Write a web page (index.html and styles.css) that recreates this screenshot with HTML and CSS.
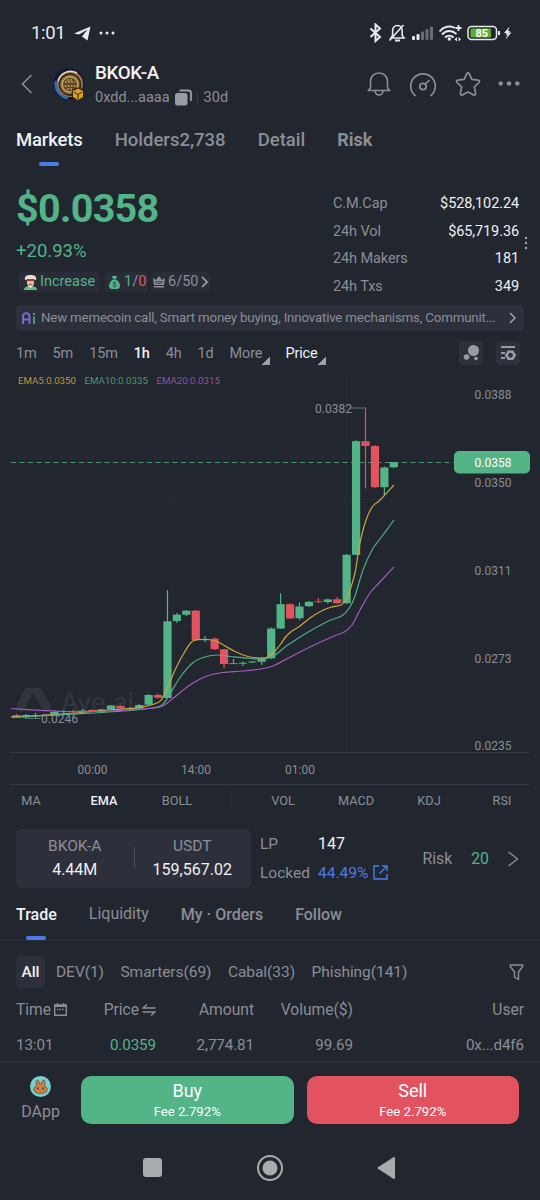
FILE: index.html
```html
<!DOCTYPE html>
<html lang="en">
<head>
  <meta charset="UTF-8">
  <meta name="viewport" content="width=device-width, initial-scale=1.0">
  <title>BKOK-A</title>
  <link rel="stylesheet" href="styles.css">
</head>
<body>
  <div class="status">
    <span class="clock">1:01</span>
    <svg class="telegram" width="17" height="15" viewBox="0 0 17 15"><path d="M0 7.5 16.500.5 13.500 14.500 8 10.500 13.500 3.500 5 8.500z" fill="#e8e9ee"/></svg>
    <svg width="16" height="4" viewBox="0 0 16 4" fill="#e8e9ee"><circle cx="2" cy="2" r="1.5"/><circle cx="8" cy="2" r="1.5"/><circle cx="14" cy="2" r="1.5"/></svg>
    <svg class="status-icons" width="144" height="20" viewBox="370 23 144 20" fill="none" stroke="#e8e9ee" stroke-width="1.6">
      <path d="m371.500 28.500 9.500 8.500-4.500 4V24.500l4.500 4-9.500 8.500" stroke-width="2"/>
      <path d="M392 38h13l-1.800-2.500V31c0-3-1.800-5.500-4.800-5.500s-4.800 2.500-4.800 5.500v4.500zM390.500 40.500 404.500 25" />
      <path d="M396 40.500h5" stroke-width="2"/>
      <g stroke="none" fill="#e8e9ee"><rect x="413" y="36" width="3" height="4" rx="1"/><rect x="417.500" y="34" width="3" height="6" rx="1"/></g>
      <g stroke="none" fill="#686c74"><rect x="422" y="31.500" width="3" height="8.500" rx="1"/><rect x="426.500" y="29" width="3" height="11" rx="1"/><rect x="431" y="26.500" width="3" height="13.500" rx="1"/></g>
      <path d="M440.500 31.500c4-5 10.500-6.500 15.500-3.500M443 34.500c4-4.500 10-4.500 14.500-.5M446 37.500c2.500-2.500 6-2.500 8.500 0" stroke-width="2"/>
      <circle cx="450.300" cy="39" r="1.700" fill="#e8e9ee" stroke="none"/>
      <path d="M459.500 25v6M456.500 28h6" stroke-width="1.800"/>
      <path d="m458 37-2.500 2.300 2.500 2.300zM459.500 37l2.500 2.300-2.500 2.300z" fill="#e8e9ee" stroke="none"/>
      <rect x="469" y="26.500" width="28.500" height="13" rx="3.500" stroke-width="1.500"/>
      <rect x="471.500" y="28.500" width="20.500" height="9" rx="1" fill="#5fae2e" stroke="none"/>
      <path d="M500 31v4" stroke-width="2"/>
      <text x="476.500" y="37" class="battery">85</text>
      <path d="m510.500 26.500-5.500 6.500h3l-2 1.500h2.500l-2 5 6-7h-3l2-1.500h-2.500z" fill="#e8e9ee" stroke="none"/>
    </svg>
  </div>

  <header class="header">
    <svg class="back" width="12" height="20" viewBox="0 0 12 20"><path d="M10.500 1 1.500 10l9 9" fill="none" stroke="#8b8e96" stroke-width="1.600"/></svg>
    <svg class="coin" width="33" height="33" viewBox="0 0 33 33">
      <circle cx="16" cy="16" r="15.500" fill="#11183f"/>
      <path d="M3 13A14 14 0 0 0 15 30" fill="none" stroke="#2f6fb8" stroke-width="2.500"/>
      <circle cx="17" cy="16" r="13" fill="#a17f48"/>
      <path d="M5 13A13 13 0 0 1 24 5" fill="none" stroke="#e9d9b8" stroke-width="1.500"/>
      <circle cx="17" cy="16.500" r="10.500" fill="none" stroke="#3a2c1c" stroke-width="1.800"/>
      <circle cx="17" cy="16.500" r="7.500" fill="#5e4524" stroke="#ddb45f"/>
      <path d="M12 14h10M11.500 18h11M14 21h6M14 12h6" stroke="#e7c77d" stroke-dasharray="2 1"/>
      <circle cx="25" cy="26" r="6.500" fill="#2a2416"/>
      <path d="m25 20.500 5 2.500v6l-5 3-5-3v-6z" fill="#d9a021"/>
      <path d="m21 24 4 2.500 4-2.500M25 26.500V31" stroke="#2a2416" fill="none"/>
    </svg>
    <div class="token">
      <h1>BKOK-A</h1>
      <div class="address">
        <span>0xdd...aaaa</span>
        <svg width="17" height="17" viewBox="0 0 17 17"><path d="M4.500 1.500h9a2.500 2.500 0 0 1 2.500 2.500v8" fill="none" stroke="#9a9ca3" stroke-width="1.800"/><rect x="0" y="4" width="12.500" height="12.500" rx="2.500" fill="#9a9ca3"/></svg>
        <span class="age">30d</span>
      </div>
    </div>
    <div class="actions">
      <svg width="24" height="26" viewBox="0 0 24 26" fill="none" stroke="#8b8e96" stroke-width="1.600" stroke-linejoin="round"><path d="M1.200 19.500 3.500 17v-6.500C3.500 5.500 7 2 12 2s8.500 3.500 8.500 8.500V17l2.300 2.500z"/><path d="M8 20c.3 2.700 2 4 4 4s3.700-1.300 4-4"/></svg>
      <svg width="28" height="26" viewBox="0 0 28 26" fill="none" stroke="#8b8e96" stroke-width="1.700" stroke-linecap="round"><path d="M6 24.500A12.300 12.300 0 1 1 22 24.500"/><circle cx="14" cy="15.500" r="3.200"/><path d="m16.300 13 3.700-3.500"/></svg>
      <svg width="26" height="26" viewBox="0 0 26 26" fill="none" stroke="#8b8e96" stroke-width="1.700" stroke-linejoin="round"><path d="M11.800 2.600c.5-1 1.900-1 2.400 0l2.600 5.700 6.400.8c1.200.2 1.700 1.500.8 2.400l-4.600 4.400 1.200 6.500c.2 1.200-.9 2-1.900 1.500L13 20.900l-5.700 3c-1 .5-2.100-.3-1.900-1.500l1.200-6.500L2 11.500c-.9-.9-.4-2.200.8-2.400l6.400-.8z"/></svg>
      <svg width="22" height="26" viewBox="0 0 22 26" fill="#8b8e96"><circle cx="2.700" cy="12.500" r="2.300"/><circle cx="11" cy="12.500" r="2.300"/><circle cx="19.300" cy="12.500" r="2.300"/></svg>
    </div>
  </header>

  <nav class="tabs">
    <a class="active">Markets</a>
    <a>Holders2,738</a>
    <a>Detail</a>
    <a class="risk-tab">Risk</a>
  </nav>

  <section class="summary">
    <div class="price-box">
      <div class="price">$0.0358</div>
      <div class="change">+20.93%</div>
      <div class="chips">
        <span class="chip increase">
          <svg width="13" height="15" viewBox="0 0 13 15"><path d="M1 5C0 1 3 0 6.500 0S13 1 12 5z" fill="#e7ddd3"/><path d="M3 4h7v4.500c0 4-7 4-7 0z" fill="#eab38a"/><path d="M2.500 4h8v2h-8z" fill="#7b5038"/><path d="M5 9h3v1H5z" fill="#b34b3e"/><path d="M0 15c0-3 3-4 6.500-4S13 12 13 15z" fill="#64bd90"/><path d="m4 11 2.500 2L9 11z" fill="#eee"/></svg>
          Increase
        </span>
        <span class="chip bag">
          <svg width="11" height="13" viewBox="0 0 11 13"><path d="M3 0h5L7 3H4zM4 3.500h3c3 2 4 4.500 4 6.500 0 2-1.500 3-3 3H3c-1.500 0-3-1-3-3 0-2 1-4.500 4-6.500z" fill="#53b488"/><text x="3.500" y="11" class="bag-sign">$</text></svg>
          <span><i class="up">1</i>/<i class="down">0</i></span>
        </span>
        <span class="chip rank">
          <svg width="12" height="12" viewBox="0 0 12 12"><path d="M0 2 3 4l3-4 3 4 3-2-1 7H1zM1 10h10v1.500H1z" fill="#8b8e96"/><text x="2" y="8" class="top">TOP</text></svg>
          6/50
          <svg width="7" height="12" viewBox="0 0 7 12"><path d="m1 1 5 5-5 5" fill="none" stroke="#a0a2aa" stroke-width="1.700"/></svg>
        </span>
      </div>
    </div>
    <dl class="stats">
      <dt>C.M.Cap</dt><dd>$528,102.24</dd>
      <dt>24h Vol</dt><dd>$65,719.36</dd>
      <dt>24h Makers</dt><dd>181</dd>
      <dt>24h Txs</dt><dd>349</dd>
    </dl>
    <svg class="dots" width="4" height="14" viewBox="0 0 4 14" fill="#a0a2aa"><circle cx="2" cy="2" r="1.200"/><circle cx="2" cy="7" r="1.200"/><circle cx="2" cy="12" r="1.200"/></svg>
  </section>

  <div class="ai-bar">
    <svg width="14" height="12" viewBox="0 0 14 12" fill="none" stroke-width="2"><path d="M1 12V4.500C1 2 2.500 1.200 4.200 1.200S7.500 2 7.500 4.500V12M1 7.500h6.500" stroke="#7b68cc"/><path d="M12 4.500V12M12 1v2" stroke="#3d9c83"/></svg>
    <p>New memecoin call, Smart money buying, Innovative mechanisms, Communit...</p>
    <svg width="7" height="12" viewBox="0 0 7 12"><path d="m1 1 5 5-5 5" fill="none" stroke="#a0a2aa" stroke-width="1.500"/></svg>
  </div>

  <div class="intervals">
    <span>1m</span>
    <span>5m</span>
    <span>15m</span>
    <span class="on">1h</span>
    <span>4h</span>
    <span>1d</span>
    <span class="drop">More</span>
    <span class="drop white">Price</span>
    <div class="tools">
      <svg width="24" height="24" viewBox="0 0 24 24" fill="#9a9ca3"><circle cx="14.500" cy="9.500" r="5.500"/><circle cx="7.500" cy="16" r="2.800"/><circle cx="17" cy="17.500" r="1.800"/></svg>
      <svg width="24" height="24" viewBox="0 0 24 24" fill="none" stroke="#9a9ca3" stroke-width="2"><path d="M5 6h14M5 12h4M5 17h4"/><path d="M12.500 10.800h4l2.200 3.500-2.200 3.500h-4l-2.200-3.500z" stroke-width="2.600"/></svg>
    </div>
  </div>

  <!-- chart, drawn by the script below -->
  <svg id="chart" width="540" height="414" viewBox="0 371 540 414">
    <path class="grid" d="M173 373v379M346 373v379M0 499.500h454M0 626.500h454"/>
    <path class="axis" d="M10 752.500h520M10 784.500h520"/>
    <g class="watermark">
      <path d="M25 688h16l9 17a4 4 0 0 1-7 5L33 693l-9 17a4 4 0 0 1-7-5z"/>
      <text x="61" y="711">Ave.ai</text>
    </g>
    <text class="ema" x="18" y="384" fill="#b79a3c">EMA5:0.0350</text>
    <text class="ema" x="84.500" y="384" fill="#4a9a79">EMA10:0.0335</text>
    <text class="ema" x="156.500" y="384" fill="#8f55a8">EMA20:0.0315</text>
    <path class="current" d="M11 462.500h443"/>
    <g id="candles"></g>
    <g id="lines"></g>
    <path d="M350 408h15.500M28 718.500h12" stroke="#686c74"/>
    <g class="label">
      <text x="315" y="412.500">0.0382</text>
      <text x="41" y="723">0.0246</text>
      <text x="474.500" y="399">0.0388</text>
      <text x="474.500" y="487">0.0350</text>
      <text x="474.500" y="574.500">0.0311</text>
      <text x="474.500" y="662.500">0.0273</text>
      <text x="474.500" y="750">0.0235</text>
      <text x="77.500" y="774">00:00</text>
      <text x="181" y="774">14:00</text>
      <text x="285" y="774">01:00</text>
    </g>
    <rect x="454" y="451" width="76" height="22.500" rx="5" fill="#53b488"/>
    <text class="label now" x="474.500" y="467">0.0358</text>
  </svg>

  <div class="indicators">
    <span>MA</span>
    <span class="on">EMA</span>
    <span>BOLL</span>
    <i></i>
    <span>VOL</span>
    <span>MACD</span>
    <span>KDJ</span>
    <span>RSI</span>
  </div>

  <section class="pool">
    <div class="pair">
      <div><span>BKOK-A</span><b>4.44M</b></div>
      <div><span>USDT</span><b>159,567.02</b></div>
    </div>
    <div class="lp">
      <span>LP</span><b>147</b>
      <span>Locked</span>
      <a>44.49%
        <svg width="15" height="15" viewBox="0 0 15 15" fill="none" stroke="#4d7ce6" stroke-width="1.400"><path d="M6 1H1v13h13V9M9 1h5v5M14 1 6.500 8.500"/></svg>
      </a>
    </div>
    <div class="pool-risk">
      <span>Risk</span>
      <em>20</em>
      <svg width="12" height="16" viewBox="0 0 12 16"><path d="m1.500 1 9 7-9 7" fill="none" stroke="#8b8e96" stroke-width="1.400"/></svg>
    </div>
  </section>

  <nav class="subtabs">
    <a class="active">Trade</a>
    <a class="thin">Liquidity</a>
    <a>My · Orders</a>
    <a>Follow</a>
  </nav>

  <div class="filters">
    <span class="all">All</span>
    <span>DEV(1)</span>
    <span>Smarters(69)</span>
    <span>Cabal(33)</span>
    <span>Phishing(141)</span>
    <svg width="15" height="17" viewBox="0 0 15 17"><path d="M1.800 1h11.400c.8 0 1 .9.500 1.500L9.500 8v7.500l-4-2.500V8L1.300 2.500C.8 1.900 1 1 1.800 1z" fill="none" stroke="#8b8e96" stroke-width="1.400" stroke-linejoin="round"/></svg>
  </div>

  <div class="trades">
    <div class="row">
      <span>Time <svg width="13" height="13" viewBox="0 0 13 13" fill="none" stroke="#8b8e96" stroke-width="1.400"><path d="M.7 2h11.600v10.300H.7zM3.500 0v2M9.500 0v2"/><path d="M.7 3h11.600" stroke-width="2"/><path d="M3 6.500h7" stroke-dasharray="1.500 1"/></svg></span>
      <span>Price <svg width="14" height="12" viewBox="0 0 14 12" fill="none" stroke="#8b8e96" stroke-width="1.400"><path d="M5 .5 1 4h12.500M9 11.500 13 8H.5"/></svg></span>
      <span>Amount</span>
      <span>Volume($)</span>
      <span>User</span>
    </div>
    <div class="row">
      <span>13:01</span>
      <span class="up">0.0359</span>
      <span>2,774.81</span>
      <span>99.69</span>
      <span>0x...d4f6</span>
    </div>
  </div>

  <footer class="bottom">
    <div class="dapp">
      <svg width="21" height="21" viewBox="0 0 21 21"><circle cx="10.500" cy="10.500" r="10.500" fill="#78d0d5"/><path d="M6.500 10C5 2.500 8.500 2 9.500 8h2c1-6 4.500-5.500 3 2 2.500 1 3 3 2.500 4.500-.6 2-3 3-6.500 3s-5.900-1-6.500-3C3.500 13 4 11 6.500 10z" fill="#ce8247" stroke="#6d4a34" stroke-width=".8"/><path d="M8 11.500v2M13 11.500v2" stroke="#43302a" stroke-width="1.300"/></svg>
      DApp
    </div>
    <button class="buy">Buy<small>Fee 2.792%</small></button>
    <button class="sell">Sell<small>Fee 2.792%</small></button>
  </footer>

  <div class="system-nav">
    <svg width="19" height="19" viewBox="0 0 19 19"><rect width="19" height="19" rx="3" fill="#aaabaf"/></svg>
    <svg width="26" height="26" viewBox="0 0 26 26"><circle cx="13" cy="13" r="12" fill="none" stroke="#aaabaf" stroke-width="2"/><circle cx="13" cy="13" r="7.500" fill="#aaabaf"/></svg>
    <svg width="19" height="22" viewBox="0 0 19 22"><path d="M17 1v20L1.500 11z" fill="#aaabaf" stroke="#aaabaf" stroke-width="2" stroke-linejoin="round"/></svg>
  </div>

  <script>
    const GREEN = '#53b488';
    const RED = '#e2535f';

    // [color, body top, body bottom, wick top, wick bottom]
    const candles = [
      ['r', 715, 717.5, 714, 718], ['g', 715, 717.5, 714, 719], ['g', 715.2, 716, 713, 718], ['r', 714.8, 716, 714, 716],
      ['g', 712, 716, 711, 716], ['g', 711, 712, 710, 713], ['r', 711, 712, 709.5, 714], ['g', 710.5, 711.5, 709, 713],
      ['r', 710, 712, 709, 712], ['g', 709.5, 712, 709, 713], ['g', 705.5, 709.5, 705, 710], ['r', 706, 708, 705, 709],
      ['r', 708, 709, 707, 709], ['g', 705, 708.5, 704, 709], ['g', 695, 704.7, 694, 705], ['r', 695, 697.7, 693.5, 698.7],
      ['g', 621.3, 698, 590, 698], ['g', 614.7, 621, 613, 623], ['g', 610.7, 614.7, 610, 616], ['r', 610.6, 640, 610, 640],
      ['g', 639.3, 640.2, 636, 642], ['r', 638.7, 649.2, 637.5, 650], ['r', 649.2, 664, 649, 668], ['g', 663.2, 664.1, 659, 664],
      ['g', 662.7, 663.7, 661.5, 666], ['g', 661.5, 662.5, 661, 663], ['g', 658.3, 661.8, 657, 665], ['g', 628.5, 658.3, 627.5, 659],
      ['g', 604.2, 628.5, 593.3, 629], ['r', 604.2, 618.4, 603.5, 619], ['g', 606.5, 618.2, 602.5, 620], ['g', 601.8, 606.2, 601, 607],
      ['r', 601.2, 602.1, 598, 603], ['g', 599.4, 602, 598.5, 603.5], ['r', 599.2, 603.2, 597, 604], ['g', 554.8, 603.2, 554, 604],
      ['g', 441.2, 554.8, 440.3, 555], ['r', 441.2, 446, 407.5, 488.5], ['r', 446, 487.2, 445.3, 488], ['g', 467.5, 487.2, 466.5, 495],
      ['g', 462, 467.3, 462, 468]
    ];

    const lines = [
      ['#c9a83c', [[11,717],[40,715.5],[75,713],[110,710],[140,707.3],[158,702.5],[163,697],[169,684],[176,668],[184,653],[191,642.5],[197,639.8],[208,639.5],[218,642],[226,646.5],[236,652],[248,656.5],[260,658],[267,657.3],[274,652],[280,645],[286,636.5],[292,631],[300,626],[310,618],[320,611.8],[330,607.5],[341,605],[346,600],[350,590],[355,573],[359,548],[363,530],[368,515],[373,506],[380,500],[394,485]]],
      ['#4fae85', [[11,717.5],[75,714],[130,710.5],[155,707.5],[163,704],[170,694],[180,677.5],[192,663.5],[203,657.5],[217,655],[230,656.5],[250,658.5],[265,659],[275,655],[287,645.5],[297,639],[310,631],[330,620.3],[342,615.7],[350,607],[355,596],[363,570],[372,550],[380,539],[394,520]]],
      ['#a25cbc', [[11,708.5],[40,710.3],[70,711.5],[110,711],[140,709],[160,707],[171,700],[182,691],[193,683],[207,676],[223,672.5],[243,671],[263,668.5],[273,666],[287,658.7],[310,647],[333,636.5],[345,631.5],[352,625],[360,610],[370,593],[379,583],[394,566.8]]]
    ];

    document.getElementById('candles').innerHTML = candles.map(([c, top, bottom, high, low], i) => {
      const x = 16.6 + i * 9.43;
      const color = c === 'g' ? GREEN : RED;
      return `<rect x="${x - 4.1}" y="${top}" width="8.2" height="${bottom - top}" fill="${color}"/>` +
        `<rect x="${x - 0.6}" y="${high}" width="1.2" height="${low - high}" fill="${color}"/>`;
    }).join('');

    // smooth curve through all the points
    function curve(p) {
      let d = `M${p[0]}`;
      for (let i = 0; i < p.length - 1; i++) {
        const a = p[i - 1] || p[i], b = p[i], c = p[i + 1], e = p[i + 2] || c;
        d += `C${b[0] + (c[0] - a[0]) / 6},${b[1] + (c[1] - a[1]) / 6} ${c[0] - (e[0] - b[0]) / 6},${c[1] - (e[1] - b[1]) / 6} ${c}`;
      }
      return d;
    }

    document.getElementById('lines').innerHTML = lines.map(([color, p]) =>
      `<path d="${curve(p)}" fill="none" stroke="${color}" stroke-width="1.2"/>`).join('');
  </script>
</body>
</html>
```
FILE: styles.css
```css
* {
  box-sizing: border-box;
}
body {
  margin: 0;
  width: 540px;
  height: 1200px;
  overflow: hidden;
  background-color: #22262f;
  color: #8b8e96;
  font-family: Roboto, sans-serif;
  font-size: 15px;
  line-height: 20px;
}
svg {
  display: block;
  flex: none;
}
i, em {
  font-style: normal;
}
.up {
  color: #53b488;
}
.down {
  color: #e2535f;
}
.on {
  color: #f0f1f5;
  font-weight: 500;
}

/* status bar */
.status {
  display: flex;
  align-items: center;
  height: 66px;
  padding: 0 27px 0 31px;
}
.clock {
  color: #e8e9ee;
  font-size: 18.5px;
  letter-spacing: -0.3px;
  width: 43px;
}
.telegram {
  margin-right: 8px;
}
.status-icons {
  margin-left: auto;
}
.battery {
  font-size: 11px;
  font-weight: 700;
  fill: #fff;
  stroke: none;
}

/* header */
.header {
  display: flex;
  align-items: center;
  height: 46px;
  margin: -5px 0 5px;
  padding: 0 20px 0 21px;
}
.coin {
  margin: 0 9px 0 20px;
}
.token h1 {
  margin: 3px 0 0;
  color: #f0f1f5;
  font-size: 18.8px;
  font-weight: 500;
  line-height: 24px;
  letter-spacing: -0.4px;
}
.address {
  display: flex;
  align-items: center;
  font-size: 14.5px;
  line-height: 26px;
}
.address svg {
  margin: 0 5px 0 5px;
}
.age {
  border-left: 1px solid #343842;
  padding-left: 6px;
  line-height: 12px;
}
.actions {
  display: flex;
  margin-left: auto;
}
.actions svg + svg {
  margin-left: 18px;
}
.actions svg:last-child {
  margin-left: 17px;
}

/* tabs */
.tabs {
  display: flex;
  height: 58px;
  padding: 16px 16px 0;
  font-size: 18.5px;
  font-weight: 500;
  line-height: 25px;
}
.tabs a {
  margin-right: 32px;
}
.tabs a:first-child {
  letter-spacing: -0.15px;
}
.tabs .risk-tab {
  font-weight: 700;
  font-size: 18px;
  margin-top: -1px;
}
.active {
  color: #f0f1f5;
}
.active::after {
  content: "";
  display: block;
  width: 20px;
  height: 4px;
  margin: 9px auto 0;
  border-radius: 2px;
  background-color: #4d7ce6;
}

/* price and stats */
.summary {
  display: flex;
  height: 135px;
  padding: 0 12px 0 16px;
}
.price-box {
  width: 317px;
}
.price {
  margin-top: 17px;
  color: #53b488;
  font-size: 39.5px;
  font-weight: 700;
  line-height: 44px;
  letter-spacing: -0.7px;
}
.change {
  margin-top: 9px;
  color: #53b488;
  font-size: 18.5px;
  line-height: 22px;
}
.chips {
  display: flex;
  margin: 10px 0 0 3px;
}
.chip {
  display: flex;
  align-items: center;
  gap: 4px;
  height: 20px;
  border-radius: 4px;
  background-color: #2a2d37;
  font-size: 14.5px;
}
.increase {
  width: 81px;
  padding-left: 5px;
  gap: 3px;
  color: #53b488;
}
.bag {
  width: 43px;
  margin: 0 3px 0 5px;
  padding-left: 4px;
}
.rank {
  width: 59px;
  padding-left: 2px;
  gap: 3px;
}
.bag-sign {
  font-size: 7px;
  fill: #22262f;
}
.top {
  font-size: 4px;
  font-weight: 700;
  fill: #2a2d37;
}
.stats {
  display: grid;
  grid-template-columns: auto auto;
  grid-auto-rows: 27.5px;
  width: 186px;
  margin: 19px 5px 0 0;
  font-size: 14.5px;
  line-height: 29px;
  letter-spacing: -0.1px;
}
.stats dd {
  margin: 0;
  color: #f0f1f5;
  text-align: right;
}
.dots {
  margin-top: 66px;
}

.ai-bar {
  display: flex;
  align-items: center;
  height: 26px;
  margin: 0 16px;
  padding: 0 8px 0 6px;
  border-radius: 4px;
  background-color: #2d303b;
}
.ai-bar p {
  flex: 1;
  margin: 0 0 0 5px;
  font-size: 13.3px;
  letter-spacing: -0.18px;
  white-space: nowrap;
}

/* chart */
.intervals {
  display: flex;
  align-items: center;
  height: 40px;
  padding: 5px 20px 0 16px;
  font-size: 14.5px;
  letter-spacing: -0.15px;
}
.intervals span {
  margin-right: 16px;
}
.intervals .drop {
  display: flex;
  margin-right: 15px;
}
.drop::after {
  content: "";
  align-self: flex-end;
  width: 8px;
  height: 8px;
  margin: 0 0 -1px;
  background: linear-gradient(135deg, transparent 50%, #a0a2aa 50%);
}
.white {
  color: #f0f1f5;
}
.tools {
  display: flex;
  gap: 13px;
  margin: -1px 0 0 auto;
}
.tools svg {
  border-radius: 4px;
  background-color: #2d303b;
}
.grid {
  stroke: #282c35;
}
.axis {
  stroke: #343842;
}
.watermark {
  fill: #30343c;
  font: 500 25px Inter, sans-serif;
}
.ema {
  font-size: 9.7px;
}
.label {
  font-size: 12px;
  fill: #8b8e96;
}
.now {
  fill: #fff;
}
.current {
  stroke: #459273;
  stroke-dasharray: 5 3.5;
}
.indicators {
  display: flex;
  align-items: center;
  gap: 33px;
  height: 32px;
  padding-left: 11px;
  font-size: 12.7px;
}
.indicators span {
  width: 40px;
  text-align: center;
}
.indicators i {
  width: 1px;
  height: 20px;
  margin-right: -1px;
  background-color: #2d313b;
}

/* pool */
.pool {
  display: flex;
  height: 59px;
  margin: 12px 21px 0 16px;
}
.pair {
  display: flex;
  width: 235px;
  padding-top: 5px;
  border-radius: 5px;
  background-color: #2d303b;
}
.pair div {
  flex: 1;
  text-align: center;
}
.pair div + div {
  background: linear-gradient(#4b4e58, #4b4e58) 0 13px / 1px 21px no-repeat;
}
.pair span, .pair b {
  display: block;
  line-height: 24px;
}
.pair span {
  font-size: 15.5px;
}
.pool b {
  color: #f0f1f5;
  font-size: 16px;
  font-weight: 400;
}
.lp {
  display: grid;
  grid-template-columns: 58px auto;
  grid-auto-rows: 29px;
  align-content: start;
  margin-left: 9px;
  font-size: 15.5px;
  line-height: 30px;
}
.lp a {
  display: flex;
  align-items: center;
  gap: 5px;
  color: #4d7ce6;
}
.pool-risk {
  display: flex;
  align-items: center;
  margin-left: auto;
  font-size: 15.8px;
}
.pool-risk em {
  margin: 0 18px 0 19px;
  color: #53b488;
}

.subtabs {
  display: flex;
  height: 53px;
  padding: 17px 16px 0;
  border-bottom: 1px solid #2b2f38;
  font-size: 16px;
  font-weight: 500;
}
.subtabs a {
  margin-right: 32px;
}
.subtabs .thin {
  font-weight: 400;
  margin-top: -1px;
}
.subtabs .active::after {
  margin-top: 11px;
}

/* trades */
.filters {
  display: flex;
  align-items: center;
  height: 32px;
  margin: 15px 16px 0;
  font-size: 15.5px;
  letter-spacing: -0.05px;
}
.filters span {
  margin-right: 16.5px;
}
.filters .all {
  width: 29px;
  height: 32px;
  margin-right: 11px;
  border-radius: 5px;
  background-color: #2d303b;
  color: #f0f1f5;
  font-weight: 500;
  line-height: 32px;
  text-align: center;
}
.filters svg {
  margin-left: auto;
}
.trades {
  height: 74px;
  padding: 4px 16px 0;
  border-bottom: 1px solid #30343d;
}
.row {
  display: grid;
  grid-template-columns: 60px 80px 98px 99px 171px;
  height: 35px;
  align-items: center;
  font-size: 15.6px;
}
.row + .row {
  font-size: 15.2px;
  letter-spacing: -0.1px;
}
.row span {
  display: flex;
  align-items: center;
  justify-content: flex-end;
  gap: 3px;
}
.row span:first-child {
  justify-content: flex-start;
}

/* bottom bar */
.bottom {
  display: flex;
  height: 62px;
  padding: 14px 21px 0 16px;
}
.dapp {
  display: flex;
  flex-direction: column;
  align-items: center;
  gap: 5px;
  width: 49px;
  margin-right: 16px;
  font-size: 16px;
}
.bottom button {
  flex: 1;
  height: 48px;
  padding: 2px 0 0;
  border: none;
  border-radius: 10px;
  color: #fff;
  font-family: inherit;
  font-size: 18px;
  line-height: 21px;
}
.bottom small {
  display: block;
  font-size: 13.2px;
}
.buy {
  margin-right: 13px;
  background-color: #53b488;
}
.sell {
  background-color: #e2535f;
}
.system-nav {
  display: flex;
  align-items: center;
  justify-content: space-between;
  height: 87px;
  padding: 0 144px 0 143px;
}
```
